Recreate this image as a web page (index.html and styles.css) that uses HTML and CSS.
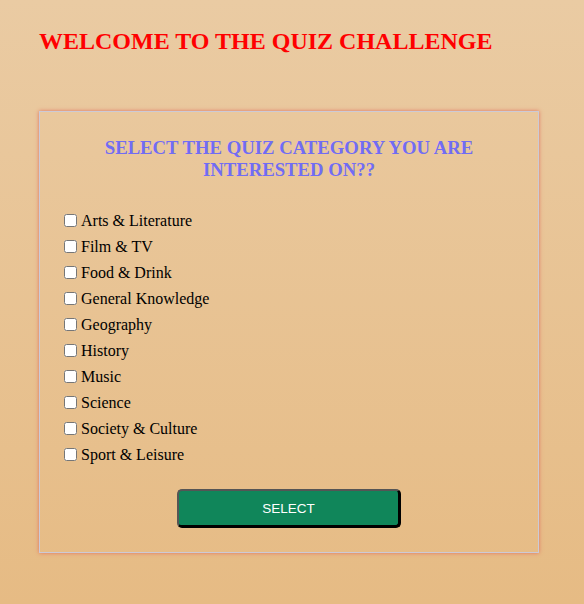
FILE: index.html
```html
<!DOCTYPE html>
<html>
<head>
<meta charset="utf-8">
<link rel="stylesheet" href="styles.css">
</head>
<body>
<div class="page">
  <h2 class="title">WELCOME TO THE QUIZ CHALLENGE</h2>
  <form class="card">
    <h3 class="subtitle">SELECT THE QUIZ CATEGORY YOU ARE INTERESTED ON??</h3>
    <div class="list">
      <label class="row"><input type="checkbox"><span>Arts &amp; Literature</span></label>
      <label class="row"><input type="checkbox"><span>Film &amp; TV</span></label>
      <label class="row"><input type="checkbox"><span>Food &amp; Drink</span></label>
      <label class="row"><input type="checkbox"><span>General Knowledge</span></label>
      <label class="row"><input type="checkbox"><span>Geography</span></label>
      <label class="row"><input type="checkbox"><span>History</span></label>
      <label class="row"><input type="checkbox"><span>Music</span></label>
      <label class="row"><input type="checkbox"><span>Science</span></label>
      <label class="row"><input type="checkbox"><span>Society &amp; Culture</span></label>
      <label class="row"><input type="checkbox"><span>Sport &amp; Leisure</span></label>
    </div>
    <div class="actions">
      <button type="button" class="btn">SELECT</button>
    </div>
  </form>
</div>
</body>
</html>
```

FILE: styles.css
```css
html {
  min-height: 100%;
  background: linear-gradient(#eacba3, #e6bb84);
}
body {
  margin: 0;
  min-height: 604px;
  font-family: "Liberation Serif", "Times New Roman", serif;
  background: linear-gradient(#eacba3, #e6bb84);
}
.page {
  padding: 8px 0 0 39px;
}
.title {
  margin: 19px 0 0;
  font-size: 24px;
  line-height: 28px;
  font-weight: bold;
  color: #ff0000;
}
.card {
  margin-top: 56px;
  width: 500px;
  box-sizing: border-box;
  border: 1px solid #cccad6;
  box-shadow: 0 0 4px #e0705f;
  padding: 6px 20px 24px;
}
.subtitle {
  margin: 19px 0 0;
  font-size: 18.72px;
  line-height: 22px;
  text-align: center;
  color: #716cf4;
}
.list {
  margin-top: 30px;
  display: flex;
  flex-direction: column;
  gap: 6px;
}
.row {
  display: flex;
  align-items: center;
  height: 20px;
  font-size: 16px;
  line-height: 20px;
  color: #000;
}
.row input {
  margin: -1px 4px 0 4px;
  width: 13px;
  height: 13px;
}
.actions {
  margin-top: 24px;
  display: flex;
  justify-content: center;
}
.btn {
  width: 224px;
  height: 39px;
  box-sizing: border-box;
  background: #10865a;
  color: #fff;
  font-family: "Liberation Sans", Arial, sans-serif;
  font-size: 13.5px;
  border-radius: 5px;
  border-style: solid;
  border-width: 2px 3px 3px 2px;
  border-color: #555 #000 #000 #555;
  padding: 0;
}
```
